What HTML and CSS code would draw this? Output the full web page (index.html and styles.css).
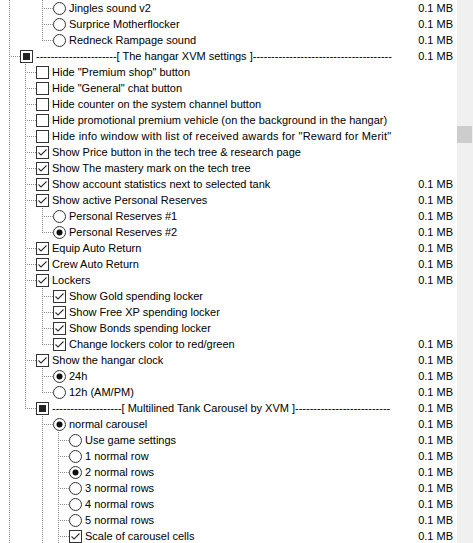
FILE: index.html
```html
<!DOCTYPE html>
<html>
<head>
<meta charset="utf-8">
<link rel="stylesheet" href="styles.css">
</head>
<body>
<div class="pane">
  <div class="list">
    <div class="row"><i class="a a0 v"></i><i class="a a1"></i><i class="own"></i><svg class="ctl" viewBox="0 0 13 13"><circle cx="6.5" cy="6.5" r="6" class="ro"/></svg><span class="t">Jingles sound v2</span><span class="sz">0.1 MB</span></div>
    <div class="row"><i class="a a0 v"></i><i class="a a1"></i><i class="own"></i><svg class="ctl" viewBox="0 0 13 13"><circle cx="6.5" cy="6.5" r="6" class="ro"/></svg><span class="t">Surprice Motherflocker</span><span class="sz">0.1 MB</span></div>
    <div class="row"><i class="a a0 v"></i><i class="a a1"></i><i class="own end"></i><svg class="ctl" viewBox="0 0 13 13"><circle cx="6.5" cy="6.5" r="6" class="ro"/></svg><span class="t">Redneck Rampage sound</span><span class="sz">0.1 MB</span></div>

    <div class="row"><i class="own"></i><svg class="ctl" viewBox="0 0 13 13"><rect x="0.5" y="0.5" width="12" height="12" class="bx"/><rect x="3" y="3" width="7" height="7" class="fill"/></svg><span class="t">----------------------[ The hangar XVM settings ]--------------------------------------</span><span class="sz">0.1 MB</span></div>

    <div class="row"><i class="a a0 v"></i><i class="own"></i><svg class="ctl" viewBox="0 0 13 13"><rect x="0.5" y="0.5" width="12" height="12" class="bx"/></svg><span class="t">Hide "Premium shop" button</span></div>
    <div class="row"><i class="a a0 v"></i><i class="own"></i><svg class="ctl" viewBox="0 0 13 13"><rect x="0.5" y="0.5" width="12" height="12" class="bx"/></svg><span class="t">Hide "General" chat button</span></div>
    <div class="row"><i class="a a0 v"></i><i class="own"></i><svg class="ctl" viewBox="0 0 13 13"><rect x="0.5" y="0.5" width="12" height="12" class="bx"/></svg><span class="t">Hide counter on the system channel button</span></div>
    <div class="row"><i class="a a0 v"></i><i class="own"></i><svg class="ctl" viewBox="0 0 13 13"><rect x="0.5" y="0.5" width="12" height="12" class="bx"/></svg><span class="t">Hide promotional premium vehicle (on the background in the hangar)</span></div>
    <div class="row"><i class="a a0 v"></i><i class="own"></i><svg class="ctl" viewBox="0 0 13 13"><rect x="0.5" y="0.5" width="12" height="12" class="bx"/></svg><span class="t wide">Hide info window with list of received awards for "Reward for Merit"</span></div>
    <div class="row"><i class="a a0 v"></i><i class="own"></i><svg class="ctl" viewBox="0 0 13 13"><rect x="0.5" y="0.5" width="12" height="12" class="bx"/><path d="M2.5 6.5 L5 9 L10.5 3.5" class="ck"/></svg><span class="t">Show Price button in the tech tree &amp; research page</span></div>
    <div class="row"><i class="a a0 v"></i><i class="own"></i><svg class="ctl" viewBox="0 0 13 13"><rect x="0.5" y="0.5" width="12" height="12" class="bx"/><path d="M2.5 6.5 L5 9 L10.5 3.5" class="ck"/></svg><span class="t">Show The mastery mark on the tech tree</span></div>
    <div class="row"><i class="a a0 v"></i><i class="own"></i><svg class="ctl" viewBox="0 0 13 13"><rect x="0.5" y="0.5" width="12" height="12" class="bx"/><path d="M2.5 6.5 L5 9 L10.5 3.5" class="ck"/></svg><span class="t">Show account statistics next to selected tank</span><span class="sz">0.1 MB</span></div>
    <div class="row"><i class="a a0 v"></i><i class="own"></i><svg class="ctl" viewBox="0 0 13 13"><rect x="0.5" y="0.5" width="12" height="12" class="bx"/><path d="M2.5 6.5 L5 9 L10.5 3.5" class="ck"/></svg><span class="t">Show active Personal Reserves</span><span class="sz">0.1 MB</span></div>
    <div class="row"><i class="a a0 v"></i><i class="a a1 v"></i><i class="own"></i><svg class="ctl" viewBox="0 0 13 13"><circle cx="6.5" cy="6.5" r="6" class="ro"/></svg><span class="t">Personal Reserves #1</span><span class="sz">0.1 MB</span></div>
    <div class="row"><i class="a a0 v"></i><i class="a a1 v"></i><i class="own end"></i><svg class="ctl" viewBox="0 0 13 13"><circle cx="6.5" cy="6.5" r="6" class="ro"/><circle cx="6.5" cy="6.5" r="3" class="dot"/></svg><span class="t">Personal Reserves #2</span><span class="sz">0.1 MB</span></div>
    <div class="row"><i class="a a0 v"></i><i class="own"></i><svg class="ctl" viewBox="0 0 13 13"><rect x="0.5" y="0.5" width="12" height="12" class="bx"/><path d="M2.5 6.5 L5 9 L10.5 3.5" class="ck"/></svg><span class="t">Equip Auto Return</span><span class="sz">0.1 MB</span></div>
    <div class="row"><i class="a a0 v"></i><i class="own"></i><svg class="ctl" viewBox="0 0 13 13"><rect x="0.5" y="0.5" width="12" height="12" class="bx"/><path d="M2.5 6.5 L5 9 L10.5 3.5" class="ck"/></svg><span class="t">Crew Auto Return</span><span class="sz">0.1 MB</span></div>
    <div class="row"><i class="a a0 v"></i><i class="own"></i><svg class="ctl" viewBox="0 0 13 13"><rect x="0.5" y="0.5" width="12" height="12" class="bx"/><path d="M2.5 6.5 L5 9 L10.5 3.5" class="ck"/></svg><span class="t">Lockers</span><span class="sz">0.1 MB</span></div>
    <div class="row"><i class="a a0 v"></i><i class="a a1 v"></i><i class="own"></i><svg class="ctl" viewBox="0 0 13 13"><rect x="0.5" y="0.5" width="12" height="12" class="bx"/><path d="M2.5 6.5 L5 9 L10.5 3.5" class="ck"/></svg><span class="t">Show Gold spending locker</span></div>
    <div class="row"><i class="a a0 v"></i><i class="a a1 v"></i><i class="own"></i><svg class="ctl" viewBox="0 0 13 13"><rect x="0.5" y="0.5" width="12" height="12" class="bx"/><path d="M2.5 6.5 L5 9 L10.5 3.5" class="ck"/></svg><span class="t">Show Free XP spending locker</span></div>
    <div class="row"><i class="a a0 v"></i><i class="a a1 v"></i><i class="own"></i><svg class="ctl" viewBox="0 0 13 13"><rect x="0.5" y="0.5" width="12" height="12" class="bx"/><path d="M2.5 6.5 L5 9 L10.5 3.5" class="ck"/></svg><span class="t">Show Bonds spending locker</span></div>
    <div class="row"><i class="a a0 v"></i><i class="a a1 v"></i><i class="own end"></i><svg class="ctl" viewBox="0 0 13 13"><rect x="0.5" y="0.5" width="12" height="12" class="bx"/><path d="M2.5 6.5 L5 9 L10.5 3.5" class="ck"/></svg><span class="t">Change lockers color to red/green</span><span class="sz">0.1 MB</span></div>
    <div class="row"><i class="a a0 v"></i><i class="own"></i><svg class="ctl" viewBox="0 0 13 13"><rect x="0.5" y="0.5" width="12" height="12" class="bx"/><path d="M2.5 6.5 L5 9 L10.5 3.5" class="ck"/></svg><span class="t">Show the hangar clock</span><span class="sz">0.1 MB</span></div>
    <div class="row"><i class="a a0 v"></i><i class="a a1 v"></i><i class="own"></i><svg class="ctl" viewBox="0 0 13 13"><circle cx="6.5" cy="6.5" r="6" class="ro"/><circle cx="6.5" cy="6.5" r="3" class="dot"/></svg><span class="t">24h</span><span class="sz">0.1 MB</span></div>
    <div class="row"><i class="a a0 v"></i><i class="a a1 v"></i><i class="own end"></i><svg class="ctl" viewBox="0 0 13 13"><circle cx="6.5" cy="6.5" r="6" class="ro"/></svg><span class="t">12h (AM/PM)</span><span class="sz">0.1 MB</span></div>

    <div class="row"><i class="a a0 v"></i><i class="own end"></i><svg class="ctl" viewBox="0 0 13 13"><rect x="0.5" y="0.5" width="12" height="12" class="bx"/><rect x="3" y="3" width="7" height="7" class="fill"/></svg><span class="t">-------------------[ Multilined Tank Carousel by XVM ]--------------------------</span><span class="sz">0.1 MB</span></div>
    <div class="row"><i class="a a0 v"></i><i class="a a1"></i><i class="own"></i><svg class="ctl" viewBox="0 0 13 13"><circle cx="6.5" cy="6.5" r="6" class="ro"/><circle cx="6.5" cy="6.5" r="3" class="dot"/></svg><span class="t">normal carousel</span><span class="sz">0.1 MB</span></div>
    <div class="row"><i class="a a0 v"></i><i class="a a1"></i><i class="a a2 v"></i><i class="own"></i><svg class="ctl" viewBox="0 0 13 13"><circle cx="6.5" cy="6.5" r="6" class="ro"/></svg><span class="t">Use game settings</span><span class="sz">0.1 MB</span></div>
    <div class="row"><i class="a a0 v"></i><i class="a a1"></i><i class="a a2 v"></i><i class="own"></i><svg class="ctl" viewBox="0 0 13 13"><circle cx="6.5" cy="6.5" r="6" class="ro"/></svg><span class="t">1 normal row</span><span class="sz">0.1 MB</span></div>
    <div class="row"><i class="a a0 v"></i><i class="a a1"></i><i class="a a2 v"></i><i class="own"></i><svg class="ctl" viewBox="0 0 13 13"><circle cx="6.5" cy="6.5" r="6" class="ro"/><circle cx="6.5" cy="6.5" r="3" class="dot"/></svg><span class="t">2 normal rows</span><span class="sz">0.1 MB</span></div>
    <div class="row"><i class="a a0 v"></i><i class="a a1"></i><i class="a a2 v"></i><i class="own"></i><svg class="ctl" viewBox="0 0 13 13"><circle cx="6.5" cy="6.5" r="6" class="ro"/></svg><span class="t">3 normal rows</span><span class="sz">0.1 MB</span></div>
    <div class="row"><i class="a a0 v"></i><i class="a a1"></i><i class="a a2 v"></i><i class="own"></i><svg class="ctl" viewBox="0 0 13 13"><circle cx="6.5" cy="6.5" r="6" class="ro"/></svg><span class="t">4 normal rows</span><span class="sz">0.1 MB</span></div>
    <div class="row"><i class="a a0 v"></i><i class="a a1"></i><i class="a a2 v"></i><i class="own"></i><svg class="ctl" viewBox="0 0 13 13"><circle cx="6.5" cy="6.5" r="6" class="ro"/></svg><span class="t">5 normal rows</span><span class="sz">0.1 MB</span></div>
    <div class="row"><i class="a a0 v"></i><i class="a a1"></i><i class="a a2 v"></i><i class="own"></i><svg class="ctl" viewBox="0 0 13 13"><rect x="0.5" y="0.5" width="12" height="12" class="bx"/><path d="M2.5 6.5 L5 9 L10.5 3.5" class="ck"/></svg><span class="t">Scale of carousel cells</span><span class="sz">0.1 MB</span></div>
  </div>
  <div class="sb"><div class="thumb"></div></div>
</div>
</body>
</html>
```
FILE: styles.css
```css
html, body {
  margin: 0;
  padding: 0;
  background: #fff;
}
body {
  font-family: "Liberation Sans", Arial, sans-serif;
  font-size: 11px;
  color: #000;
  width: 473px;
  height: 543px;
  overflow: hidden;
}
.pane {
  display: flex;
  height: 543px;
}
.list {
  flex: 1;
  min-width: 0;
  overflow: hidden;
}
.row {
  display: flex;
  align-items: center;
  height: 16px;
  line-height: 16px;
  white-space: nowrap;
  --dot: #8a8a8a;
}
.a {
  display: block;
  height: 16px;
  flex: none;
}
.a0 { width: 16px; }
.a1 { width: 17px; }
.a2 { width: 16px; }
.v {
  background: repeating-linear-gradient(to bottom, var(--dot) 0 1px, transparent 1px 2px) 9px 0 / 1px 16px no-repeat;
}
.own {
  display: block;
  width: 20px;
  height: 16px;
  flex: none;
  background:
    repeating-linear-gradient(to right, var(--dot) 0 1px, transparent 1px 2px) 11px 8px / 9px 1px no-repeat,
    repeating-linear-gradient(to bottom, var(--dot) 0 1px, transparent 1px 2px) 9px 0 / 1px 16px no-repeat;
}
.own.end {
  background:
    repeating-linear-gradient(to right, var(--dot) 0 1px, transparent 1px 2px) 11px 8px / 9px 1px no-repeat,
    repeating-linear-gradient(to bottom, var(--dot) 0 1px, transparent 1px 2px) 9px 0 / 1px 9px no-repeat;
}
.ctl {
  width: 13px;
  height: 13px;
  flex: none;
  display: block;
}
.bx {
  fill: #fff;
  stroke: #333;
  stroke-width: 1;
  shape-rendering: crispEdges;
}
.fill {
  fill: #222;
  shape-rendering: crispEdges;
}
.ck {
  fill: none;
  stroke: #333;
  stroke-width: 1.1;
}
.ro {
  fill: #fff;
  stroke: #333;
  stroke-width: 1;
}
.dot {
  fill: #111;
}
.t {
  margin-left: 3px;
}
.t.wide {
  letter-spacing: 0.2px;
}
.sz {
  margin-left: auto;
  padding-right: 4px;
  flex: none;
}
.sb {
  width: 16px;
  flex: none;
  background: #f0f0f0;
}
.thumb {
  margin-top: 126px;
  width: 15px;
  height: 17px;
  background: #cdcdcd;
}
```
